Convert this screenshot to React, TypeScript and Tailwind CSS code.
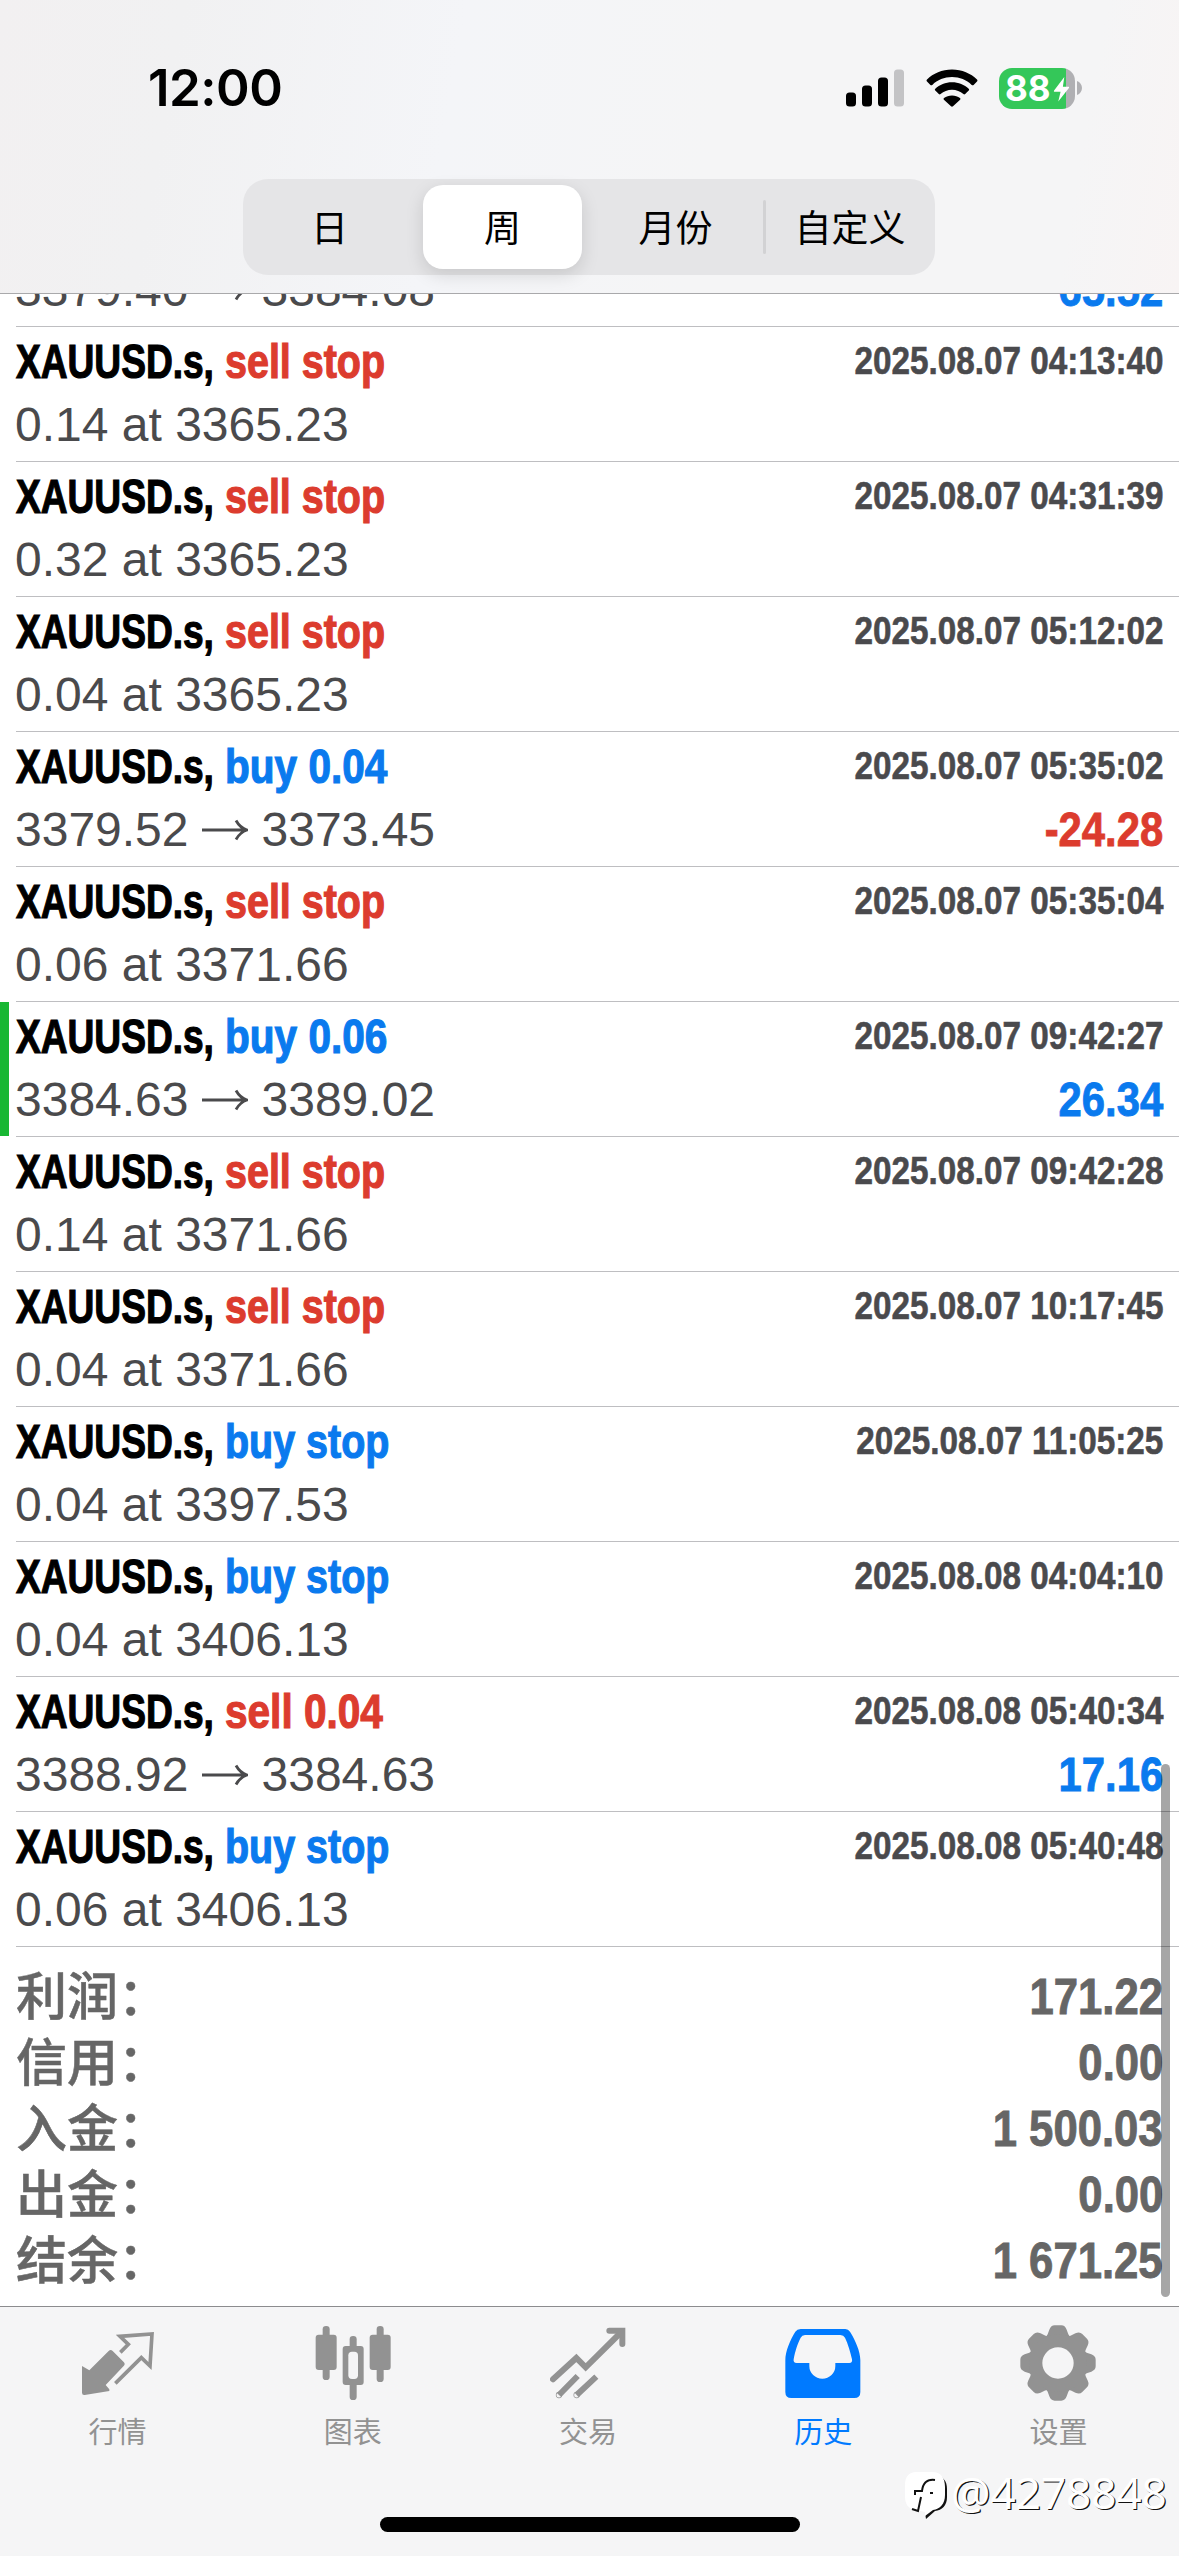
import type { ReactNode } from 'react'
import clsx from 'clsx'

type Side = 'buy' | 'sell'

interface Deal {
  side: Side
  kind: string
  time: string
  volume?: string
  price: string
  close?: string
  profit?: string
  marked?: boolean
}

const firstDeal: Deal = {
  side: 'buy', kind: '0.14', time: '2025.08.07 04:13:39', price: '3379.40', close: '3384.08', profit: '65.52',
}

const deals: Deal[] = [
  { side: 'sell', kind: 'stop', time: '2025.08.07 04:13:40', volume: '0.14', price: '3365.23' },
  { side: 'sell', kind: 'stop', time: '2025.08.07 04:31:39', volume: '0.32', price: '3365.23' },
  { side: 'sell', kind: 'stop', time: '2025.08.07 05:12:02', volume: '0.04', price: '3365.23' },
  { side: 'buy', kind: '0.04', time: '2025.08.07 05:35:02', price: '3379.52', close: '3373.45', profit: '-24.28' },
  { side: 'sell', kind: 'stop', time: '2025.08.07 05:35:04', volume: '0.06', price: '3371.66' },
  { side: 'buy', kind: '0.06', time: '2025.08.07 09:42:27', price: '3384.63', close: '3389.02', profit: '26.34', marked: true },
  { side: 'sell', kind: 'stop', time: '2025.08.07 09:42:28', volume: '0.14', price: '3371.66' },
  { side: 'sell', kind: 'stop', time: '2025.08.07 10:17:45', volume: '0.04', price: '3371.66' },
  { side: 'buy', kind: 'stop', time: '2025.08.07 11:05:25', volume: '0.04', price: '3397.53' },
  { side: 'buy', kind: 'stop', time: '2025.08.08 04:04:10', volume: '0.04', price: '3406.13' },
  { side: 'sell', kind: '0.04', time: '2025.08.08 05:40:34', price: '3388.92', close: '3384.63', profit: '17.16' },
  { side: 'buy', kind: 'stop', time: '2025.08.08 05:40:48', volume: '0.06', price: '3406.13' },
]

const totals = [
  { label: '利润', value: '171.22' },
  { label: '信用', value: '0.00' },
  { label: '入金', value: '1 500.03' },
  { label: '出金', value: '0.00' },
  { label: '结余', value: '1 671.25' },
]

function StatusBar() {
  return (
    <div className="flex h-[179px] items-start justify-between pr-[97px] pl-[148px]">
      <span className="mt-[58px] font-['Inter',sans-serif] text-[51px] leading-[60px] font-semibold tracking-[-0.5px] text-black">
        12:00
      </span>
      <div className="mt-[67px] flex h-[42px] items-center">
        <svg className="h-[38px] w-[59px]" viewBox="0 0 59 38">
          <rect x="0" y="23.5" width="10" height="14" rx="3.5" />
          <rect x="16" y="16.5" width="10" height="21" rx="3.5" />
          <rect x="32" y="8.5" width="10" height="29" rx="3.5" />
          <rect x="48" y="0.5" width="10" height="37" rx="3.5" fill="#c3c3c5" />
        </svg>
        <svg className="ml-[21px] h-[38px] w-[52px]" viewBox="0 0 52 38">
          <path d="M26 0.5C36 0.5 44.8 4.3 51 10.6c.6.6.6 1.3 0 1.9l-3.4 3.4c-.6.6-1.3.6-1.9 0C40.5 10.8 33.7 8 26 8S11.5 10.8 6.3 15.9c-.6.6-1.3.6-1.9 0L1 12.5c-.6-.6-.6-1.3 0-1.9C7.2 4.3 16 .5 26 .5z" />
          <path d="M26 13.2c6.6 0 12.4 2.5 16.7 6.5.6.6.6 1.3 0 1.9l-3.5 3.4c-.6.6-1.2.6-1.8.1-3.1-2.7-7-4.3-11.4-4.3s-8.3 1.6-11.4 4.3c-.6.5-1.2.5-1.8-.1l-3.5-3.4c-.6-.6-.6-1.3 0-1.9 4.3-4 10.1-6.5 16.7-6.5z" />
          <path d="M26 26.5c3.1 0 5.8 1 8 2.5.6.5.6 1.2.1 1.8l-7.1 6.5c-.6.6-1.4.6-2 0l-7.1-6.5c-.5-.6-.5-1.3.1-1.8 2.2-1.5 4.9-2.5 8-2.5z" />
        </svg>
        <div className="relative ml-[21px] flex h-[41px] w-[76px] items-center overflow-hidden rounded-[13px] bg-[linear-gradient(90deg,#34c759_88%,#b0b0b3_88%)] pl-[6px]">
          <span className="font-['Inter',sans-serif] text-[35px] leading-[41px] font-bold text-white">88</span>
          <svg className="absolute top-[9px] left-[54px] h-[25px] w-[17px]" viewBox="0 0 18 27">
            <path d="M12 0L1 14.5c-.5.8-.2 1.5.7 1.5H8L5.5 26.5 17 12c.5-.8.2-1.5-.7-1.5H10.5z" fill="#fff" />
          </svg>
        </div>
        <svg className="ml-[2px] h-[14px] w-[5px]" viewBox="0 0 5 14">
          <path d="M0 0c3 1 5 4 5 7s-2 6-5 7z" fill="#b0b0b3" />
        </svg>
      </div>
    </div>
  )
}

function Segment({ children, active, divided }: { children: ReactNode; active?: boolean; divided?: boolean }) {
  return (
    <div className="flex w-[173px] items-center justify-center">
      {divided && <span className="h-[54px] w-[3px] rounded-full bg-[#d2d2d4]" />}
      <span
        className={clsx(
          "h-[84px] text-center font-['Noto_Sans_CJK_SC',sans-serif] text-[37px] leading-[82px] text-black",
          active ? 'w-[159px] rounded-[20px] bg-white shadow-[0_6px_18px_rgba(0,0,0,0.13)]' : 'w-[169px]'
        )}
      >
        {children}
      </span>
    </div>
  )
}

function Header() {
  return (
    <header className="h-[294px] border-b border-[#a9a9ab] bg-[linear-gradient(100deg,#f2f0f1_0%,#f1f1f2_15%,#f4f5f8_38%,#f5f5f6_60%,#f5f5f6_90%,#f8f4f4_100%)]">
      <StatusBar />
      <div className="ml-[243px] flex h-[96px] w-[692px] items-center rounded-[25px] bg-[#e5e5e7]">
        <Segment>日</Segment>
        <Segment active>周</Segment>
        <Segment>月份</Segment>
        <Segment divided>自定义</Segment>
      </div>
    </header>
  )
}

function Arrow() {
  return (
    <svg className="mx-[13.5px] h-[22px] w-[46px]" viewBox="0 0 46 22" fill="none" stroke="#4a4a4c" strokeWidth="2.8">
      <path d="M0 11H44M34 1.5C36.5 6 40 9.5 45 11C40 12.5 36.5 16 34 20.5" />
    </svg>
  )
}

function DealRow({ deal }: { deal: Deal }) {
  const sideColor = deal.side === 'buy' ? 'text-[#0a7aee]' : 'text-[#dc3c2e]'
  const profitColor = deal.profit?.startsWith('-') ? 'text-[#dc3c2e]' : 'text-[#0a7aee]'

  return (
    <div className="flex h-[135px] w-full shrink-0">
      <div className={clsx('h-[134px] w-[9px]', deal.marked && 'bg-[#18b733]')} />
      <div className="ml-[7px] flex-1 border-b border-[#bebec1] pr-[16px]">
        <div className="flex h-[68px] justify-between font-bold whitespace-nowrap">
          <div className="flex text-[48px] leading-[69px] [-webkit-text-stroke:1.2px_currentColor]">
            <span className="w-[209px] origin-left scale-x-[0.773] text-black">XAUUSD.s,</span>
            <span
              className={clsx(
                'w-[200px] origin-left',
                deal.kind === 'stop' ? 'scale-x-[0.822]' : 'scale-x-[0.845]',
                sideColor
              )}
            >
              {deal.side} {deal.kind}
            </span>
          </div>
          <span className="origin-right scale-x-[0.864] text-[38.5px] leading-[67px] text-[#4a4a4d] [-webkit-text-stroke:0.6px_currentColor]">
            {deal.time}
          </span>
        </div>
        <div className="flex h-[59px] justify-between text-[48px] leading-[59px]">
          <div className="-ml-[1px] flex items-center text-[#4a4a4c]">
            {deal.close ? (
              <>
                <span>{deal.price}</span>
                <Arrow />
                <span>{deal.close}</span>
              </>
            ) : (
              <span>{deal.volume} at {deal.price}</span>
            )}
          </div>
          {deal.profit && (
            <span className={clsx('origin-right scale-x-[0.87] font-bold [-webkit-text-stroke:0.9px_currentColor]', profitColor)}>
              {deal.profit}
            </span>
          )}
        </div>
      </div>
    </div>
  )
}

function Totals() {
  return (
    <div className="h-[359px] pt-[17px] pr-[16px] pl-[16px] text-[#666]">
      {totals.map((t) => (
        <div key={t.label} className="flex h-[66px] items-start justify-between">
          <span className="font-['Noto_Sans_CJK_SC',sans-serif] text-[51px] leading-[58px] font-medium [-webkit-text-stroke:0.5px_currentColor]">
            {t.label}：
          </span>
          <span className="origin-right scale-x-[0.873] text-[50px] leading-[66px] font-bold [-webkit-text-stroke:0.9px_currentColor]">
            {t.value}
          </span>
        </div>
      ))}
    </div>
  )
}

function QuotesIcon() {
  return (
    <svg className="size-[76px]" viewBox="238 105 228 228" fill="#929292">
      <path d="M244 228L266 241 324 183Q330 177 336 183L369 216Q375 222 369 228L315 285 326 298V303L252 315Q244 316 244 308Z" />
      <path d="M359 187L383 163 358 139 454 132 448 228 422 203 344 280" fill="none" stroke="#929292" strokeWidth="11" />
    </svg>
  )
}

function ChartIcon() {
  return (
    <svg className="size-[76px]" viewBox="943 105 228 228" fill="#929292">
      <rect x="966" y="108" width="21" height="162" rx="10" />
      <rect x="945" y="134" width="63" height="106" rx="9" />
      <rect x="1128" y="108" width="21" height="168" rx="10" />
      <rect x="1107" y="134" width="63" height="106" rx="9" />
      <rect x="1047" y="138" width="21" height="192" rx="10" />
      <rect x="1026" y="168" width="63" height="117" rx="9" />
      <rect x="1043" y="185" width="29" height="82" rx="11" fill="#f5f5f6" />
    </svg>
  )
}

function TradeIcon() {
  return (
    <svg className="size-[76px]" viewBox="212 105 228 228" fill="none" stroke="#929292" strokeWidth="18">
      <path d="M221 268L291 204 319 232 426 126" strokeLinecap="round" />
      <path d="M390 122H429V162" strokeLinecap="round" />
      <path d="M239 315L295 258M292 315L351 260" />
      <circle cx="239" cy="315" r="1" strokeWidth="17" />
      <circle cx="292" cy="315" r="1" strokeWidth="17" />
    </svg>
  )
}

function HistoryIcon() {
  return (
    <svg className="size-[76px]" viewBox="917 105 228 228" fill="#007aff" fillRule="evenodd">
      <path d="M964 117H1098Q1107 117 1112 125C1128 151 1143 184 1143 210V306Q1143 324 1125 324H936Q918 324 918 306V210C918 184 932 151 948 125Q953 117 964 117ZM977 135Q968 135 964 143C955 160 947 185 943 208Q941 219 952 219H990V228A39 38 0 0 0 1068 228V219H1110Q1120 219 1118 208C1114 190 1106 161 1097 143Q1093 135 1083 135Z" />
    </svg>
  )
}

function GearIcon() {
  const teeth = [0, 45, 90, 135, 180, 225, 270, 315]
  return (
    <svg className="size-[76px]" viewBox="-114 -114 228 228" fill="#929292">
      {teeth.map((angle) => (
        <path key={angle} transform={`rotate(${angle})`} d="M-42 -76Q-34 -78 -31 -86L-26 -100Q-21 -113 -10 -113H10Q21 -113 26 -100L31 -86Q34 -78 42 -76L20 -50H-20Z" />
      ))}
      <circle r="67" fill="none" stroke="#929292" strokeWidth="40" />
    </svg>
  )
}

const tabs = [
  { label: '行情', icon: <QuotesIcon /> },
  { label: '图表', icon: <ChartIcon /> },
  { label: '交易', icon: <TradeIcon /> },
  { label: '历史', icon: <HistoryIcon />, active: true },
  { label: '设置', icon: <GearIcon /> },
]

function TabBar() {
  return (
    <nav className="h-[250px] border-t border-[#8c8c8e] bg-[#f5f5f6]">
      <div className="flex h-[210px] pt-[18px] pr-[3px]">
        {tabs.map((tab) => (
          <div key={tab.label} className="flex flex-1 flex-col items-center">
            {tab.icon}
            <span
              className={clsx(
                "mt-[9px] font-['Noto_Sans_CJK_SC',sans-serif] text-[29px] leading-[40px]",
                tab.active ? 'text-[#007aff]' : 'text-[#929292]'
              )}
            >
              {tab.label}
            </span>
          </div>
        ))}
      </div>
      <div className="mx-auto h-[15px] w-[420px] rounded-full bg-black" />
    </nav>
  )
}

function Watermark() {
  return (
    <div className="absolute top-[2465px] left-[905px] flex items-start">
      <svg className="mt-[6px] h-[50px] w-[46px] overflow-visible" viewBox="0 0 46 50">
        <path d="M30 4C38 5 42 10 42 18V26C42 35 37 39 30 40L21 48 20 42 24 36Z" fill="#111" />
        <path d="M11 1H27C36 1 40 7 40 16V24C40 33 35 38 28 39L20 45 20 41 11 39C3 38 0 33 0 25V14C0 6 4 1 11 1Z" fill="#fff" />
        <path d="M30 9C22 8 18 12 17 20H10V24M16 26L13 40L7 38M25 22H28" fill="none" stroke="#111" strokeWidth="2" />
      </svg>
      <span className="font-['Noto_Sans',sans-serif] text-[44px] leading-[54px] text-white [text-shadow:1.2px_1.2px_0.5px_#111]">
        @4278848
      </span>
    </div>
  )
}

export default function App() {
  return (
    <div className="relative flex h-[2556px] w-[1179px] flex-col overflow-hidden bg-white font-['Liberation_Sans',Arial,sans-serif]">
      <Header />
      <main className="relative">
        <div className="flex h-[33px] flex-col justify-end overflow-hidden">
          <DealRow deal={firstDeal} />
        </div>
        {deals.map((deal) => (
          <DealRow key={deal.time} deal={deal} />
        ))}
        <Totals />
        <div className="absolute right-[9px] bottom-[9px] h-[533px] w-[9px] rounded-full bg-black/35" />
      </main>
      <TabBar />
      <Watermark />
    </div>
  )
}
